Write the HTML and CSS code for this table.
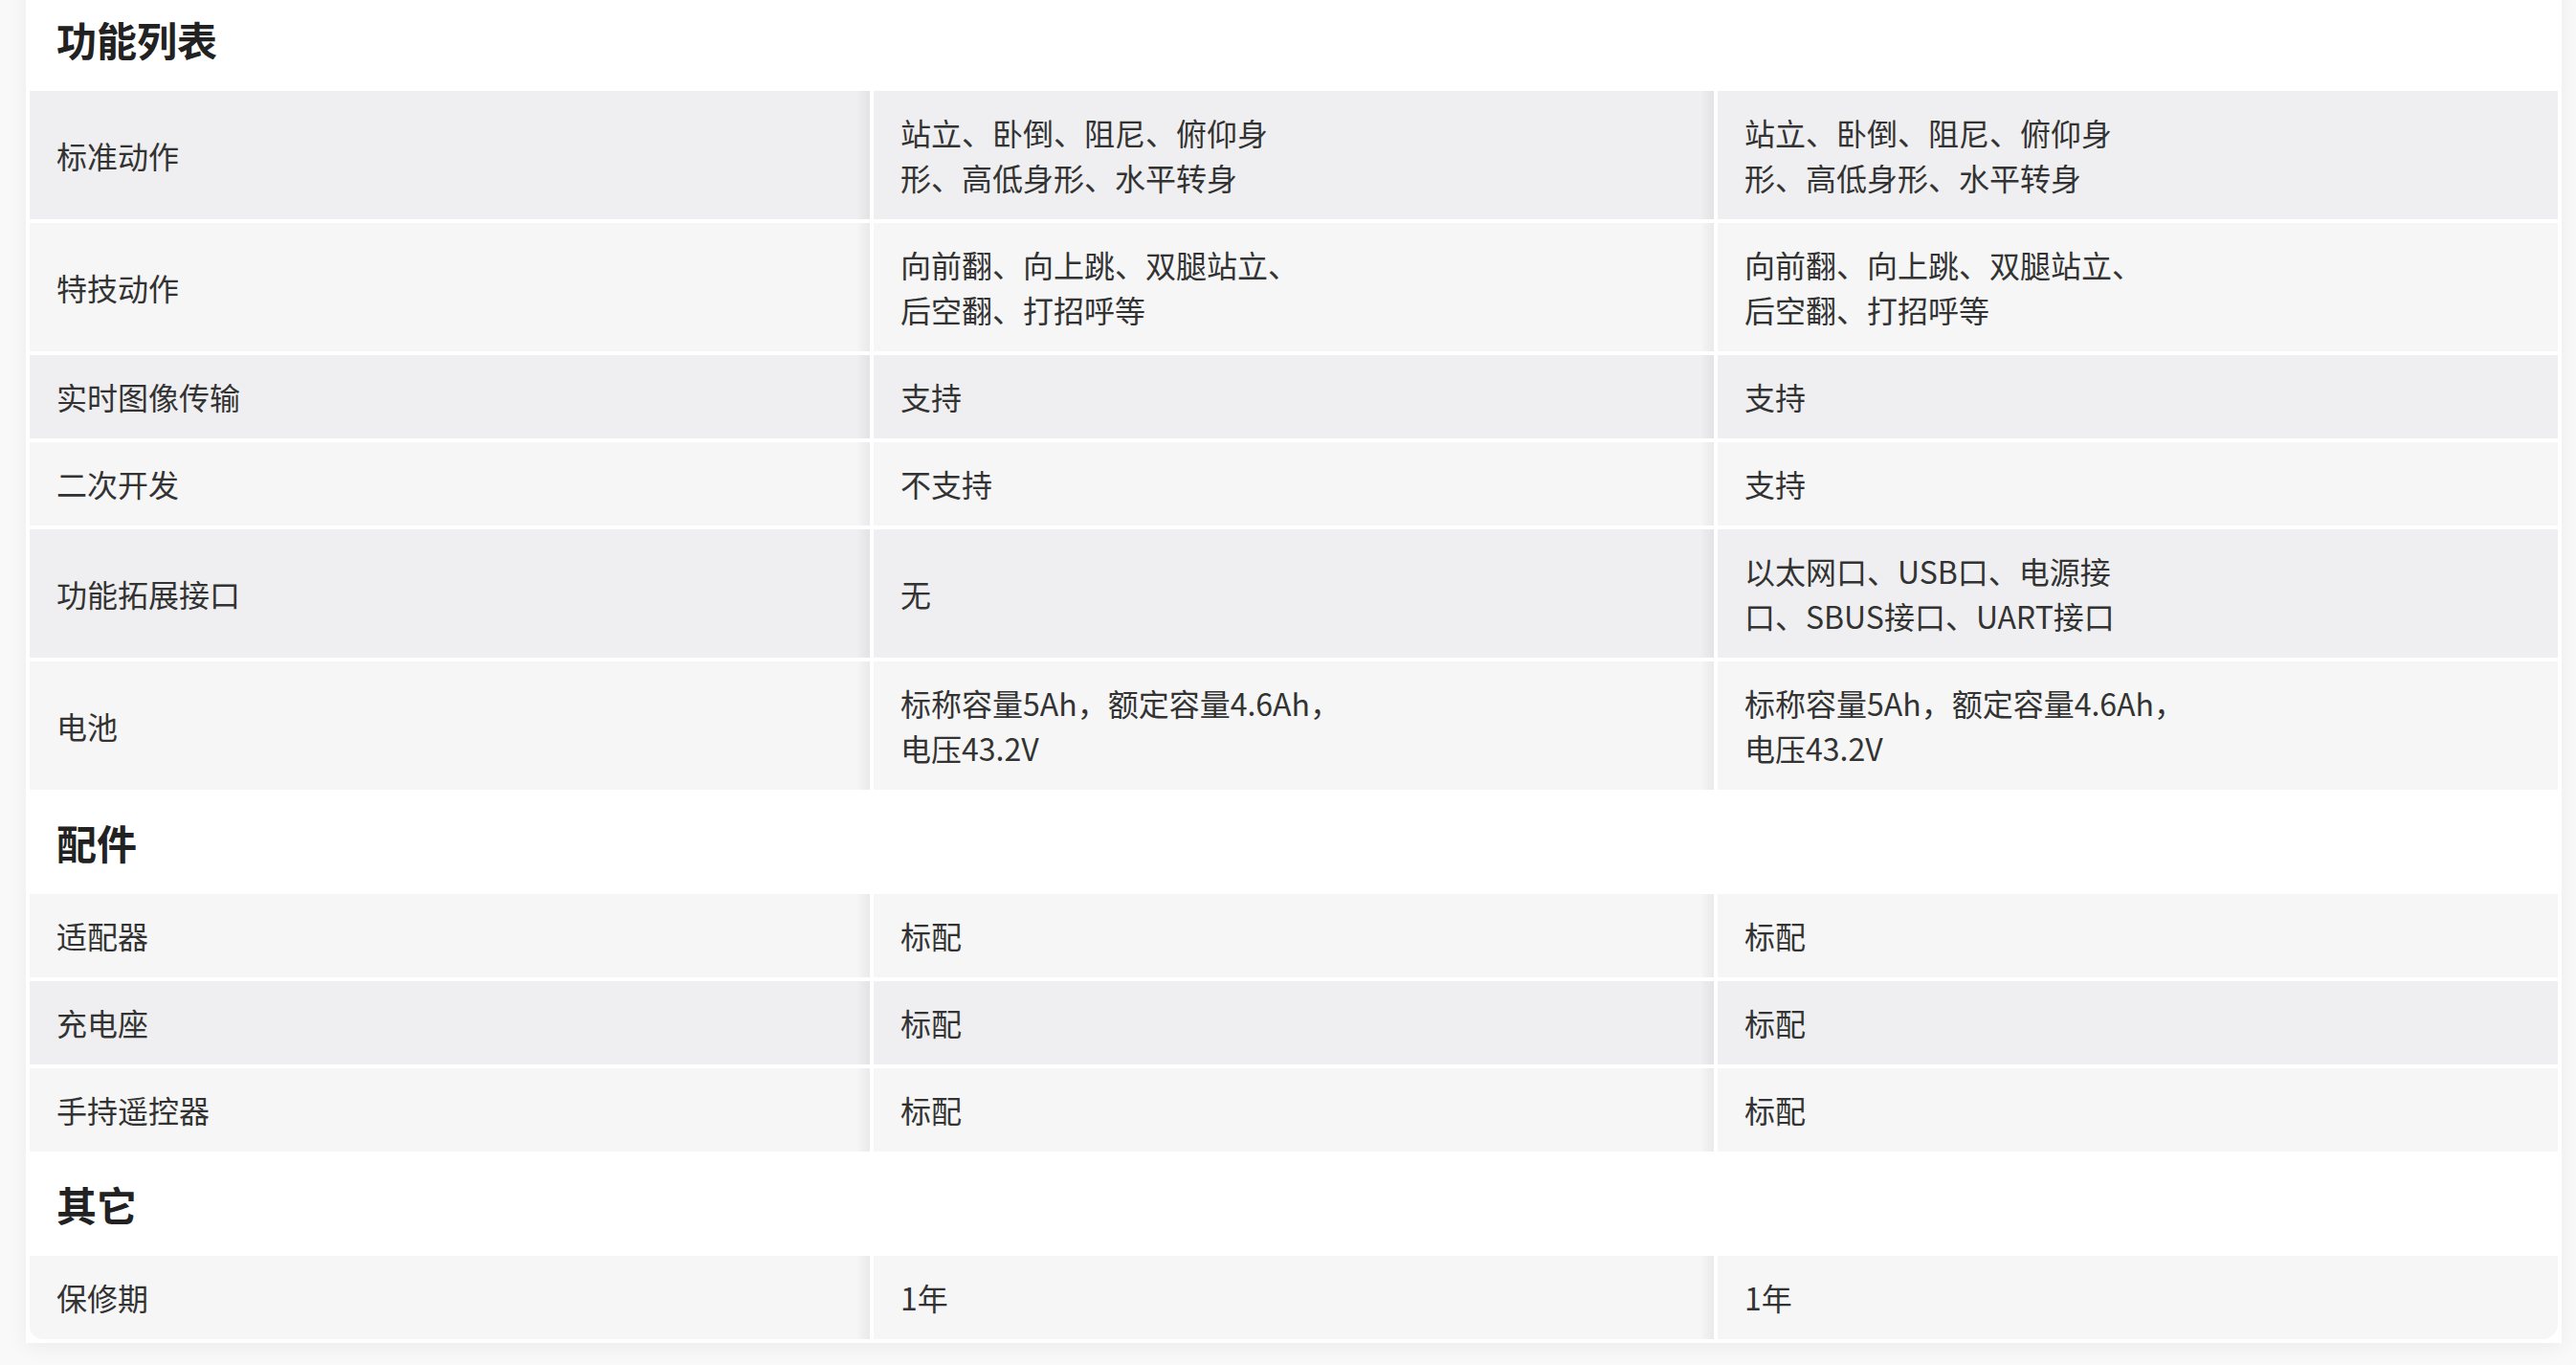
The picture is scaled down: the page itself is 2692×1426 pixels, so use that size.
FILE: index.html
```html
<!DOCTYPE html>
<html lang="zh-CN">
<head>
<meta charset="utf-8">
<title>功能列表</title>
<link rel="stylesheet" href="styles.css">
</head>
<body>
<div class="page">
  <div class="card">
    <table class="spec">
      <colgroup><col><col><col></colgroup>
      <tbody>
        <tr class="group"><th colspan="3">功能列表</th></tr>
        <tr><td>标准动作</td><td>站立、卧倒、阻尼、俯仰身<br>形、高低身形、水平转身</td><td>站立、卧倒、阻尼、俯仰身<br>形、高低身形、水平转身</td></tr>
        <tr><td>特技动作</td><td>向前翻、向上跳、双腿站立、<br>后空翻、打招呼等</td><td>向前翻、向上跳、双腿站立、<br>后空翻、打招呼等</td></tr>
        <tr><td>实时图像传输</td><td>支持</td><td>支持</td></tr>
        <tr><td>二次开发</td><td>不支持</td><td>支持</td></tr>
        <tr><td>功能拓展接口</td><td>无</td><td>以太网口、USB口、电源接<br>口、SBUS接口、UART接口</td></tr>
        <tr><td>电池</td><td>标称容量5Ah，额定容量4.6Ah，<br>电压43.2V</td><td>标称容量5Ah，额定容量4.6Ah，<br>电压43.2V</td></tr>
        <tr class="group"><th colspan="3">配件</th></tr>
        <tr><td>适配器</td><td>标配</td><td>标配</td></tr>
        <tr><td>充电座</td><td>标配</td><td>标配</td></tr>
        <tr><td>手持遥控器</td><td>标配</td><td>标配</td></tr>
        <tr class="group"><th colspan="3">其它</th></tr>
        <tr class="last"><td>保修期</td><td>1年</td><td>1年</td></tr>
      </tbody>
    </table>
  </div>
</div>
</body>
</html>
```

FILE: styles.css
```css
* { box-sizing: border-box; }

html, body {
  margin: 0;
  padding: 0;
}

body {
  background: #f9f9f9;
  font-family: "Noto Sans CJK SC", "Noto Sans", sans-serif;
  color: #333333;
  width: 2692px;
  height: 1426px;
  overflow: hidden;
}

.page {
  padding: 0 15px 0 27px;
  margin-top: -14px;
}

.card {
  background: #ffffff;
  box-shadow: 0 4px 22px rgba(0, 0, 0, 0.06);
}

.spec {
  width: 100%;
  table-layout: fixed;
  border-collapse: separate;
  border-spacing: 4px;
}

.spec td {
  font-size: 32px;
  line-height: 47px;
  padding: 20px 28px;
  vertical-align: middle;
  background-color: #f6f6f6;
  color: #333333;
  white-space: nowrap;
}

.spec tr:nth-child(even) td {
  background-color: #efeff1;
}

.spec td:nth-child(1),
.spec td:nth-child(2) {
  background-image: linear-gradient(to left, rgba(0, 0, 0, 0.05), rgba(0, 0, 0, 0) 14px);
}

.spec .group th {
  height: 101px;
  padding: 0 28px;
  text-align: left;
  font-size: 42px;
  font-weight: 700;
  color: #222222;
  background: #ffffff;
  vertical-align: middle;
}

.spec .last td:first-child { border-bottom-left-radius: 14px; }
.spec .last td:last-child { border-bottom-right-radius: 16px; }
```
